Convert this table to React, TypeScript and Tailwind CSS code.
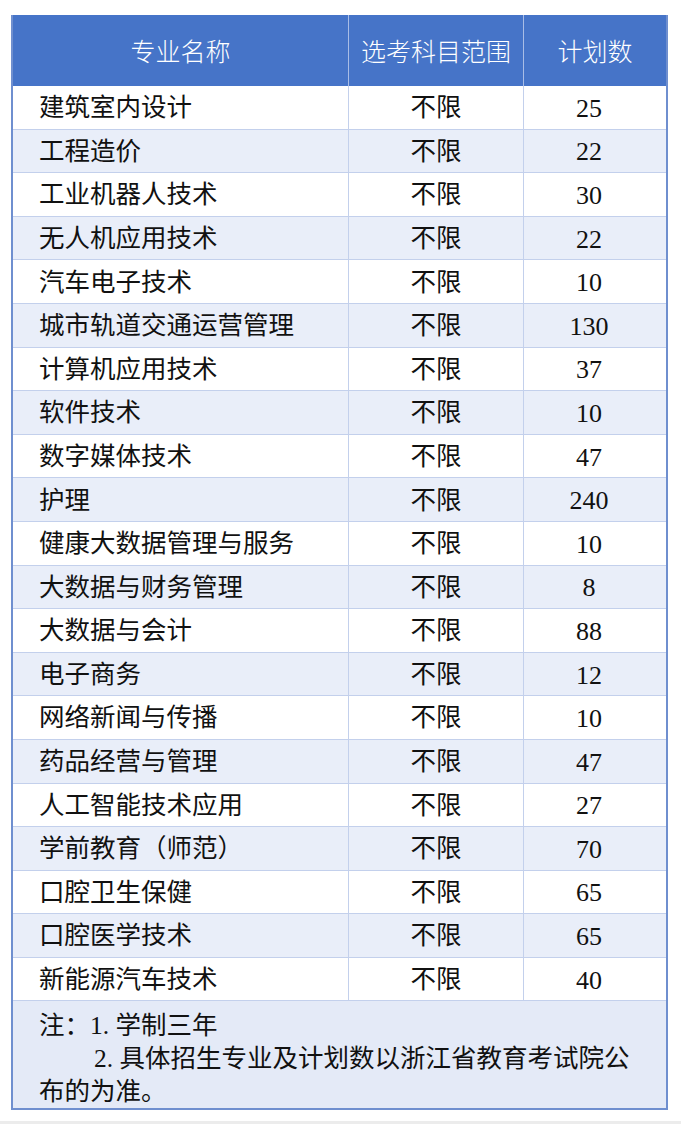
const ROWS: [string, string][] = [
  ['建筑室内设计', '25'],
  ['工程造价', '22'],
  ['工业机器人技术', '30'],
  ['无人机应用技术', '22'],
  ['汽车电子技术', '10'],
  ['城市轨道交通运营管理', '130'],
  ['计算机应用技术', '37'],
  ['软件技术', '10'],
  ['数字媒体技术', '47'],
  ['护理', '240'],
  ['健康大数据管理与服务', '10'],
  ['大数据与财务管理', '8'],
  ['大数据与会计', '88'],
  ['电子商务', '12'],
  ['网络新闻与传播', '10'],
  ['药品经营与管理', '47'],
  ['人工智能技术应用', '27'],
  ['学前教育（师范）', '70'],
  ['口腔卫生保健', '65'],
  ['口腔医学技术', '65'],
  ['新能源汽车技术', '40'],
];

export default function App() {
  return (
    <div className="w-[681px] h-[1124px] bg-white relative font-['Liberation_Serif','Noto_Sans_CJK_SC',serif] text-[#111]">
      <div className="pt-[15px] pl-[11px]">
        <div className="w-[657px] border-x-2 border-b-2 border-[#6f8fcf]">
          <div className="flex h-[71px] bg-[#4674c8] text-white text-[25px] font-['Noto_Sans_CJK_SC',sans-serif] font-light">
            <div className="w-[336px] flex items-center justify-center border-r border-[#a9bde6]">专业名称</div>
            <div className="w-[175px] flex items-center justify-center border-r border-[#a9bde6]">选考科目范围</div>
            <div className="flex-1 flex items-center justify-center">计划数</div>
          </div>
          {ROWS.map(([name, n], i) => (
            <div
              key={name}
              className={`flex h-[43.6px] text-[25.5px] border-b border-[#c3d0ec] ${i % 2 === 1 ? 'bg-[#e9eef9]' : 'bg-white'}`}
            >
              <div className="w-[336px] flex items-center pl-[26px] pt-[2px] border-r border-[#c3d0ec]">{name}</div>
              <div className="w-[175px] flex items-center justify-center pt-[2px] border-r border-[#c3d0ec]">不限</div>
              <div className="flex-1 flex items-center justify-center pr-[12px] pt-[2px] text-[26px]">{n}</div>
            </div>
          ))}
          <div className="bg-[#e4eaf7] h-[107px] pl-[26px] pr-[10px] pt-[8px] text-[25.5px] leading-[33px]">
            <div>注：1.&nbsp;学制三年</div>
            <div className="pl-[55px]">2.&nbsp;具体招生专业及计划数以浙江省教育考试院公</div>
            <div>布的为准。</div>
          </div>
        </div>
      </div>
      <div className="absolute left-0 right-0 top-[1121px] h-[3px] bg-[#ececec]" />
    </div>
  );
}
